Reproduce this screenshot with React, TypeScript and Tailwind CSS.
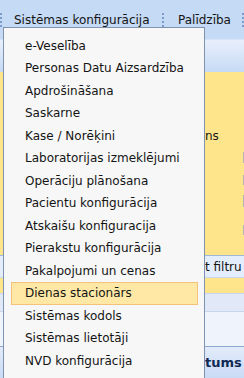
import React from "react";

const items = [
  "e-Veselība",
  "Personas Datu Aizsardzība",
  "Apdrošināšana",
  "Saskarne",
  "Kase / Norēķini",
  "Laboratorijas izmeklējumi",
  "Operāciju plānošana",
  "Pacientu konfigurācija",
  "Atskaišu konfiguracija",
  "Pierakstu konfigurācija",
  "Pakalpojumi un cenas",
  "Dienas stacionārs",
  "Sistēmas kodols",
  "Sistēmas lietotāji",
  "NVD konfigurācija",
];

function Grip() {
  return (
    <div className="flex flex-col gap-[2px] w-[2px]">
      {[0, 1, 2, 3].map((i) => (
        <div key={i} className="w-[2px] h-[2px] bg-[#7b9bcc]" />
      ))}
    </div>
  );
}

export default function App() {
  return (
    <div
      className="relative w-[244px] h-[378px] overflow-hidden text-[#141414]"
      style={{ fontFamily: '"DejaVu Sans", sans-serif' }}
    >
      {/* Background page */}
      <div className="flex flex-col w-full h-full">
        <div className="h-[39px] bg-[#c4daf5] flex items-center text-[12px]">
          <div className="w-[3px] flex justify-start">
            <Grip />
          </div>
          <div className="ml-[11px] w-[148px] whitespace-nowrap">Sistēmas konfigurācija</div>
          <div className="w-[2px]">
            <Grip />
          </div>
          <div className="ml-[14px] whitespace-nowrap">Palīdzība</div>
          <div className="ml-auto mr-[0px] w-[2px]">
            <Grip />
          </div>
        </div>
        <div className="h-[33px] border-t border-[#d6e3f6] bg-gradient-to-b from-[#e8effb] to-[#c6daf5]" />
        <div className="h-[183px] bg-[#fee58c] relative text-[12px]">
          <div className="absolute left-[205px] top-[55px]">ns</div>
          <div className="absolute right-0 top-[80px] w-[1px] h-[11px] bg-[#b5b5b5]" />
          <div className="absolute right-0 top-[103px] w-[1px] h-[10px] bg-[#b5b5b5]" />
          <div className="absolute right-0 top-[123px] w-[1px] h-[12px] bg-[#b5b5b5]" />
          <div className="absolute right-0 top-[153px] w-[1px] h-[10px] bg-[#b5b5b5]" />
        </div>
        <div className="h-[22px] border-t border-[#9db6dc] bg-[#e4edfb] flex items-center pl-[205px] text-[12px] whitespace-nowrap">
          t filtru
        </div>
        <div className="h-[16px] border-t border-[#c7d6ee] bg-[#fee58c]" />
        <div className="h-[18px] border-t border-[#c7d6ee] bg-[#e1e9f9]" />
        <div className="h-[35px] border-t border-[#c7d6ee] bg-[#eef3fc]" />
        <div className="flex-1 border-t border-[#8ea7d0] bg-gradient-to-b from-[#e2ebfa] to-[#c9dbf5] flex items-center pl-[205px] text-[13px] font-bold text-[#0f2a55] whitespace-nowrap">
          tums
        </div>
      </div>

      {/* Dropdown menu */}
      <div className="absolute left-[3px] top-[27px] w-[202px] h-[380px] bg-[#f7f7f7] border border-[#8092ad] pt-[6.5px] text-[12px]">
        {items.map((t) => {
          const active = t === "Dienas stacionārs";
          return (
            <div
              key={t}
              className={
                "h-[22.5px] ml-[7px] w-[187px] flex items-center pl-[13px] whitespace-nowrap border " +
                (active
                  ? "bg-[#ffe8a5] border-[#f5c27c]"
                  : "border-transparent")
              }
            >
              {t}
            </div>
          );
        })}
      </div>
    </div>
  );
}
